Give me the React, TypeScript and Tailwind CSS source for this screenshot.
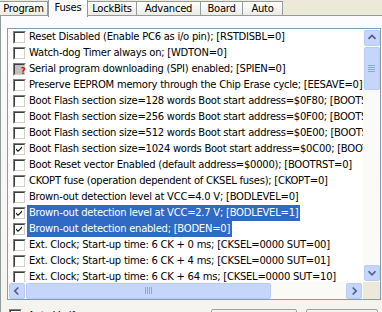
import React from 'react';

type Row = { text: string; checked?: boolean; grayed?: boolean; selected?: boolean };

const rows: Row[] = [
  { text: 'Reset Disabled (Enable PC6 as i/o pin); [RSTDISBL=0]' },
  { text: 'Watch-dog Timer always on; [WDTON=0]' },
  { text: 'Serial program downloading (SPI) enabled; [SPIEN=0]', grayed: true },
  { text: 'Preserve EEPROM memory through the Chip Erase cycle; [EESAVE=0]' },
  { text: 'Boot Flash section size=128 words Boot start address=$0F80; [BOOTSZ=11]' },
  { text: 'Boot Flash section size=256 words Boot start address=$0F00; [BOOTSZ=10]' },
  { text: 'Boot Flash section size=512 words Boot start address=$0E00; [BOOTSZ=01]' },
  { text: 'Boot Flash section size=1024 words Boot start address=$0C00; [BOOTSZ=00]', checked: true },
  { text: 'Boot Reset vector Enabled (default address=$0000); [BOOTRST=0]' },
  { text: 'CKOPT fuse (operation dependent of CKSEL fuses); [CKOPT=0]' },
  { text: 'Brown-out detection level at VCC=4.0 V; [BODLEVEL=0]' },
  { text: 'Brown-out detection level at VCC=2.7 V; [BODLEVEL=1]', checked: true, selected: true },
  { text: 'Brown-out detection enabled; [BODEN=0]', checked: true, selected: true },
  { text: 'Ext. Clock; Start-up time: 6 CK + 0 ms; [CKSEL=0000 SUT=00]' },
  { text: 'Ext. Clock; Start-up time: 6 CK + 4 ms; [CKSEL=0000 SUT=01]' },
  { text: 'Ext. Clock; Start-up time: 6 CK + 64 ms; [CKSEL=0000 SUT=10]' },
];

const tabs = [
  { label: 'Program', w: 'w-[48px]' },
  { label: 'Fuses', w: 'w-[40px]', active: true },
  { label: 'LockBits', w: 'w-[49px]' },
  { label: 'Advanced', w: 'w-[64px]' },
  { label: 'Board', w: 'w-[42px]' },
  { label: 'Auto', w: 'w-[40px]' },
];

function CheckBox({ checked, grayed }: { checked?: boolean; grayed?: boolean }) {
  return (
    <div className="relative w-[13px] h-[13px] shrink-0 border-t border-l border-[#808080] border-r border-b border-r-white border-b-white">
      <div
        className={`w-full h-full border-t border-l border-[#404040] border-r border-b border-r-[#d4d0c8] border-b-[#d4d0c8] ${
          grayed ? 'bg-[#c0c0c0]' : 'bg-white'
        }`}
      >
        {checked && (
          <svg width="9" height="9" viewBox="0 0 9 9" className="block">
            <path d="M1 3.5 L3 5.5 L7 1.5 L7 3 L3 7 L1 5 Z" fill="#000" />
          </svg>
        )}
      </div>
      {grayed && (
        <span className="absolute left-[7px] top-[4px] text-[8px] leading-[8px] font-bold text-[#e00000]">?</span>
      )}
    </div>
  );
}

function Arrow({ dir }: { dir: 'up' | 'down' | 'left' | 'right' }) {
  const d = {
    up: 'M4 9 L8 5 L12 9',
    down: 'M4 6 L8 10 L12 6',
    left: 'M9.5 4 L5.5 8 L9.5 12',
    right: 'M6.5 4 L10.5 8 L6.5 12',
  }[dir];
  return (
    <svg width="16" height="16" viewBox="0 0 16 16" className="block">
      <path d={d} stroke="#4d6185" strokeWidth="2" fill="none" />
    </svg>
  );
}

function ScrollBtn({ dir }: { dir: 'up' | 'down' | 'left' | 'right' }) {
  return (
    <div className="w-[16px] h-[16px] shrink-0 rounded-[2px] border border-[#b7cbf5] bg-[#c6d6fb] flex items-center justify-center overflow-hidden">
      <Arrow dir={dir} />
    </div>
  );
}

export default function App() {
  return (
    <div
      className="w-[382px] h-[312px] overflow-hidden bg-[#ece9d8] flex flex-col text-[10px] tracking-[-0.25px] text-black"
      style={{ fontFamily: '"DejaVu Sans", Verdana, sans-serif' }}
    >
      {/* tab strip */}
      <div className="h-[16px] flex items-end relative z-10">
        {tabs.map((t) =>
          t.active ? (
            <div
              key={t.label}
              className={`${t.w} h-[17px] -mb-[1px] pb-[3px] bg-[#fcfcfe] border-l border-r border-[#919b9c] flex items-center justify-center`}
            >
              {t.label}
            </div>
          ) : (
            <div
              key={t.label}
              className={`${t.w} h-[15px] bg-gradient-to-b from-white to-[#ecebe5] border-t border-r border-[#919b9c] border-b flex items-center justify-center`}
            >
              {t.label}
            </div>
          )
        )}
        <div className="flex-1 border-b border-[#919b9c]" />
      </div>

      {/* tab page */}
      <div className="flex-1 bg-gradient-to-b from-[#fcfcfe] to-[#f4f3ee] border-l border-[#919b9c] pt-[12px] pl-[6px] pr-[1px] flex flex-col">
        <div className="h-[272px] shrink-0 border border-[#7f9db9] bg-white flex flex-col">
          <div className="flex flex-1 min-h-0">
            <div className="flex-1 min-w-0 overflow-hidden">
              {rows.map((r, i) => (
                <div key={i} className="h-[16px] flex items-center pl-[5px] whitespace-nowrap">
                  <CheckBox checked={r.checked} grayed={r.grayed} />
                  <span
                    className={`ml-[1px] px-[2px] h-[16px] leading-[16px] ${
                      r.selected ? 'bg-[#316ac5] text-white' : ''
                    }`}
                  >
                    {r.text}
                  </span>
                </div>
              ))}
            </div>
            {/* vertical scrollbar */}
            <div className="w-[17px] bg-[#fafaf6] flex flex-col items-center py-[1px]">
              <ScrollBtn dir="up" />
              <div className="mt-[1px] w-[16px] h-[43px] rounded-[2px] border border-[#b7cbf5] bg-[#c6d6fb] flex flex-col items-center justify-center gap-[1px]">
                {[0, 1, 2, 3].map((k) => (
                  <div key={k} className="w-[7px] h-[1px] bg-[#8aa5ec]" />
                ))}
              </div>
              <div className="flex-1" />
              <ScrollBtn dir="down" />
            </div>
          </div>
          {/* horizontal scrollbar */}
          <div className="h-[17px] flex">
            <div className="flex-1 bg-[#fafaf6] flex items-center px-[1px]">
              <ScrollBtn dir="left" />
              <div className="ml-[1px] w-[245px] h-[16px] rounded-[2px] border border-[#b7cbf5] bg-[#c6d6fb] flex items-center justify-center gap-[1px]">
                {[0, 1, 2, 3].map((k) => (
                  <div key={k} className="w-[1px] h-[7px] bg-[#8aa5ec]" />
                ))}
              </div>
              <div className="flex-1" />
              <ScrollBtn dir="right" />
            </div>
            <div className="w-[17px] bg-[#ece9d8]" />
          </div>
        </div>
        <div className="mt-[9px] pl-[2px] flex items-start shrink-0">
          <CheckBox checked />
          <span className="ml-[6px] leading-[13px]">Auto Verify</span>
          <div className="ml-auto flex gap-[9px] pr-[3px]">
            <div className="w-[86px] h-[10px] border border-[#a0a0a0] rounded-t-[2px]" />
            <div className="w-[72px] h-[10px] border border-[#a0a0a0] rounded-t-[2px]" />
          </div>
        </div>
      </div>
    </div>
  );
}
